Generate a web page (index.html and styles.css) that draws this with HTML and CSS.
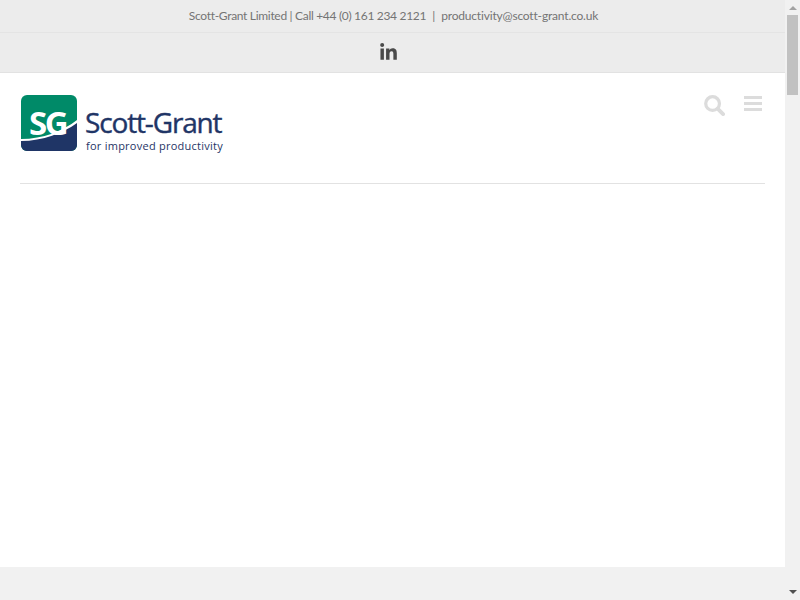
FILE: index.html
```html
<!DOCTYPE html>
<html lang="en">
<head>
<meta charset="utf-8">
<title>Scott-Grant Limited</title>
<link rel="stylesheet" href="styles.css">
</head>
<body>
<div class="page">
  <main class="main">
    <div class="topbar">
      <div class="contact"><span class="phone">Scott-Grant Limited | Call +44 (0) 161 234 2121</span><span class="sep">|</span><span class="email">productivity@scott-grant.co.uk</span></div>
      <div class="social">
        <svg class="linkedin" viewBox="0 0 448 512" aria-label="LinkedIn"><path d="M100.28 448H7.4V148.9h92.88zM53.79 108.1C24.09 108.1 0 83.5 0 53.8a53.79 53.79 0 0 1 107.58 0c0 29.7-24.1 54.3-53.79 54.3zM447.9 448h-92.68V302.4c0-34.7-.7-79.2-48.29-79.2-48.29 0-55.69 37.7-55.69 76.7V448h-92.78V148.9h89.08v40.8h1.3c12.4-23.5 42.69-48.3 87.88-48.3 94 0 111.28 61.9 111.28 142.3V448z"/></svg>
      </div>
    </div>
    <header class="header">
      <div class="header-row">
        <div class="logo">
          <div class="mark">
            <svg class="mark-bg" viewBox="0 0 56 56"><rect width="56" height="56" rx="6" fill="#008a68"/><path d="M0 45C22 45 42 38 56 27V50a6 6 0 0 1-6 6H6a6 6 0 0 1-6-6z" fill="#1f3566"/><path d="M0 44C22 44 42 36 56 25V28C42 38 22 46 0 46z" fill="#fff"/></svg>
            <span class="mark-text">SG</span>
          </div>
          <div class="wordmark">
            <div class="name">Scott-Grant</div>
            <div class="tagline">for improved productivity</div>
          </div>
        </div>
        <div class="tools">
          <svg class="search" viewBox="0 0 22 22"><circle cx="9" cy="9" r="7.2" fill="none" stroke="#dcdcdc" stroke-width="3.4"/><path d="M14.5 14.5 20 20" stroke="#dcdcdc" stroke-width="4" stroke-linecap="round"/></svg>
          <div class="burger"><span></span><span></span><span></span></div>
        </div>
      </div>
      <div class="rule"></div>
    </header>
    <div class="content"></div>
    <div class="footer"></div>
  </main>
  <aside class="scrollbar">
    <div class="arrow-up"></div>
    <div class="thumb"></div>
    <div class="track"></div>
    <div class="arrow-down"></div>
  </aside>
</div>
</body>
</html>
```

FILE: styles.css
```css
* { box-sizing: border-box; }
html, body { margin: 0; height: 100%; overflow: hidden; }
body { background: #fff; font-family: "Lato", "Open Sans", sans-serif; }
.page { display: flex; width: 800px; height: 600px; }
.main { width: 785px; display: flex; flex-direction: column; }
.topbar { background: #ececec; color: #747474; }
.contact { height: 33px; display: flex; align-items: center; justify-content: center; font-size: 12px; border-bottom: 1px solid #e4e4e4; padding: 0 0 2px 2px; }
.phone { letter-spacing: -.31px; }
.sep { margin: 0 6px; }
.email { letter-spacing: -.18px; }
.social { height: 40px; display: flex; align-items: center; justify-content: center; border-bottom: 1px solid #e2e2e2; padding-right: 8px; }
.linkedin { width: 17px; height: 19px; fill: #4a4a4a; display: block; }
.header { padding: 22px 20px 0 20px; background: #fff; }
.header-row { display: flex; justify-content: space-between; align-items: flex-start; height: 88px; }
.logo { display: flex; align-items: flex-start; margin-left: 1px; }
.mark { position: relative; width: 56px; height: 56px; }
.mark-bg { width: 56px; height: 56px; display: block; }
.mark-text { position: absolute; left: 8px; top: 9px; color: #fff; font: 700 33px/38px "Open Sans", sans-serif; letter-spacing: -2.5px; }
.wordmark { margin-left: 8px; color: #1f3566; }
.name { font: 400 28px/28px "Open Sans", sans-serif; -webkit-text-stroke: .4px #1f3566; letter-spacing: -1.15px; margin-top: 13px; }
.tagline { font: 400 11px/14px "Open Sans", sans-serif; letter-spacing: .25px; margin-top: 3px; margin-left: 1px; }
.tools { display: flex; align-items: flex-start; gap: 19px; margin-right: 3px; }
.search { width: 21px; height: 21px; display: block; }
.burger { width: 18px; display: flex; flex-direction: column; gap: 3px; margin-top: 1px; }
.burger span { height: 3px; background: #dcdcdc; }
.rule { height: 1px; background: #e2e2e2; }
.content { flex: 1; background: #fff; }
.footer { height: 33px; background: #f1f1f1; }
.scrollbar { width: 15px; background: #f1f1f1; display: flex; flex-direction: column; align-items: center; }
.arrow-up { margin-top: 6px; width: 0; height: 0; border: 4px solid transparent; border-top: 0; border-bottom-color: #a3a3a3; margin-bottom: 5px; }
.thumb { width: 11px; height: 80px; background: #c1c1c1; }
.track { flex: 1; }
.arrow-down { width: 0; height: 0; border: 4px solid transparent; border-bottom: 0; border-top-color: #505050; margin-bottom: 6px; }
```
